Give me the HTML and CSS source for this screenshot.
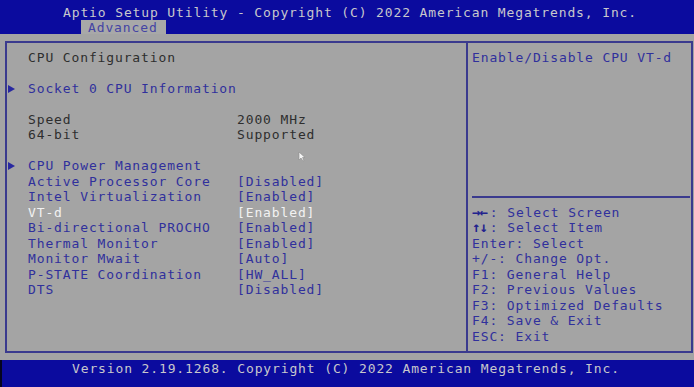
FILE: index.html
```html
<!DOCTYPE html>
<html>
<head>
  <title>Aptio Setup Utility</title>
  <link rel="stylesheet" href="styles.css">
</head>
<body>
  <div class="screen">
    <header class="topbar">
      <div class="title">Aptio Setup Utility - Copyright (C) 2022 American Megatrends, Inc.</div>
      <div class="tabs"><span class="tab">Advanced</span></div>
    </header>

    <main class="frame">
      <section class="menu">
        <div class="row plain"><span></span><span>CPU Configuration</span></div>
        <div class="row blank"></div>
        <div class="row item"><span class="arrow"></span><span>Socket 0 CPU Information</span></div>
        <div class="row blank"></div>
        <div class="row plain"><span></span><span>Speed</span><span>2000 MHz</span></div>
        <div class="row plain"><span></span><span>64-bit</span><span>Supported</span></div>
        <div class="row blank"></div>
        <div class="row item"><span class="arrow"></span><span>CPU Power Management</span></div>
        <div class="row item"><span></span><span>Active Processor Core</span><span>[Disabled]</span></div>
        <div class="row item"><span></span><span>Intel Virtualization</span><span>[Enabled]</span></div>
        <div class="row item selected"><span></span><span>VT-d</span><span>[Enabled]</span></div>
        <div class="row item"><span></span><span>Bi-directional PROCHO</span><span>[Enabled]</span></div>
        <div class="row item"><span></span><span>Thermal Monitor</span><span>[Enabled]</span></div>
        <div class="row item"><span></span><span>Monitor Mwait</span><span>[Auto]</span></div>
        <div class="row item"><span></span><span>P-STATE Coordination</span><span>[HW_ALL]</span></div>
        <div class="row item"><span></span><span>DTS</span><span>[Disabled]</span></div>

        <!-- mouse pointer left on screen -->
        <svg class="pointer" width="8" height="11" viewBox="0 0 8 11">
          <path d="M1 1 L1 9 L3 7 L5 10 L6 9.5 L4.5 6.5 L7 6.5 Z" fill="#f4f4f4" stroke="#8a8a8a" stroke-width="0.6"/>
        </svg>
      </section>

      <aside class="side">
        <div class="help">Enable/Disable CPU VT-d</div>
        <div class="rule"></div>
        <ul class="keys">
          <li><b>→←</b>: Select Screen</li>
          <li><b>↑↓</b>: Select Item</li>
          <li>Enter: Select</li>
          <li>+/-: Change Opt.</li>
          <li>F1: General Help</li>
          <li>F2: Previous Values</li>
          <li>F3: Optimized Defaults</li>
          <li>F4: Save &amp; Exit</li>
          <li>ESC: Exit</li>
        </ul>
      </aside>
    </main>

    <footer class="bottombar">Version 2.19.1268. Copyright (C) 2022 American Megatrends, Inc.</footer>
  </div>
</body>
</html>
```

FILE: styles.css
```css
/* BIOS setup screen */
body {
  margin: 0;
  background: #a4a4a4;
  font-family: "DejaVu Sans Mono", monospace;
  font-size: 13px;
  letter-spacing: 0.87px;
}

.screen {
  width: 694px;
  height: 387px;
  overflow: hidden;
  display: flex;
  flex-direction: column;
}

.topbar {
  height: 34px;
  background: #0b0b9e;
  color: #c8c8cc;
  padding-top: 5px;
  box-sizing: border-box;
}

.title {
  line-height: 15px;
  padding-left: 63px;
  white-space: nowrap;
}

.tabs {
  padding-left: 81px;
}

.tab {
  display: inline-block;
  background: #a8a8a8;
  color: #4444a4;
  height: 14px;
  line-height: 15px;
  padding: 0 8px 0 7px;
}

.frame {
  margin: 7px 1px 0 5px;
  height: 312px;
  box-sizing: border-box;
  border: 2px solid #3a3a8e;
  display: flex;
}

.menu {
  position: relative;
  width: 461px;
  box-sizing: border-box;
  border-right: 2px solid #3a3a8e;
  padding-top: 6.5px;
}

.row {
  display: grid;
  grid-template-columns: 21px 209px auto;
  height: 15.5px;
  line-height: 15.5px;
  white-space: nowrap;
}

.plain {
  color: #2e2e2e;
}

.item {
  color: #30309c;
}

.item.selected {
  color: #f2f2f2;
}

.arrow {
  display: block;
  width: 0;
  height: 0;
  margin: 4px 0 0 1px;
  border-left: 7px solid #2828a0;
  border-top: 4px solid transparent;
  border-bottom: 4px solid transparent;
}

.pointer {
  position: absolute;
  left: 291px;
  top: 108px;
}

.side {
  flex: 1;
  padding: 6.5px 0 0 4px;
  color: #30309c;
}

.help {
  height: 139.5px;
  line-height: 15.5px;
}

.rule {
  height: 15.5px;
  display: flex;
  align-items: center;
}

.rule::before {
  content: "";
  flex: 1;
  height: 2px;
  background: #3a3a8e;
  margin-right: 1px;
}

.keys {
  list-style: none;
  margin: 0;
  padding: 0;
}

.keys li {
  height: 15.5px;
  line-height: 15.5px;
  white-space: nowrap;
}

.keys b {
  color: #22228e;
  font-size: 14px;
  letter-spacing: -1px;
  margin-right: 3px;
}

.bottombar {
  margin-top: 7px;
  flex: 1;
  background: #0b0b9e;
  border-left: 2px solid #050520;
  color: #c8c8cc;
  padding: 1px 0 0 70px;
  line-height: 15px;
  white-space: nowrap;
}
```
